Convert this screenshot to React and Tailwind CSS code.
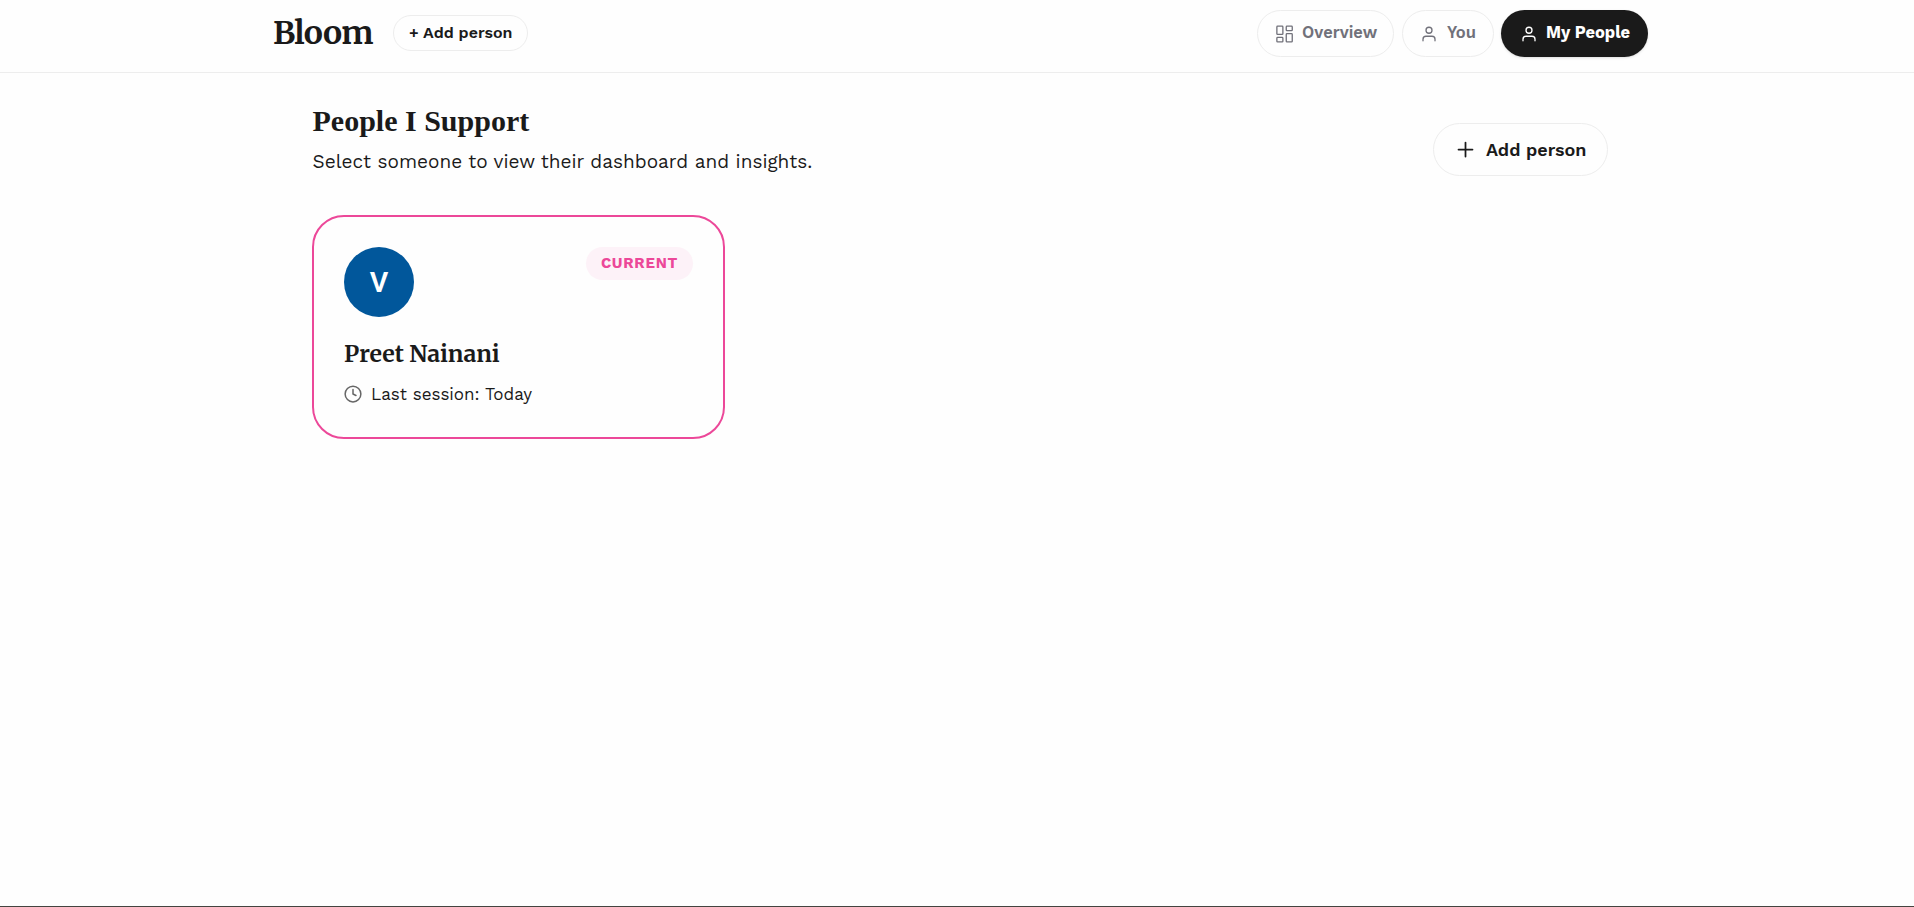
const sans = "font-['Work_Sans','Inter',sans-serif]";
const serif = "font-['Merriweather','DejaVu_Serif',serif]";

function UserIcon() {
  return (
    <svg width="18" height="18" viewBox="0 0 24 24" fill="none" stroke="currentColor" strokeWidth="1.75" strokeLinecap="round" strokeLinejoin="round">
      <path d="M20 21v-2a4 4 0 0 0-4-4H8a4 4 0 0 0-4 4v2" />
      <circle cx="12" cy="7" r="4" />
    </svg>
  );
}

function DashboardIcon() {
  return (
    <svg width="18" height="18" viewBox="0 0 24 24" fill="none" stroke="currentColor" strokeWidth="1.75" strokeLinecap="round" strokeLinejoin="round">
      <rect x="2.5" y="1.5" width="8" height="11" rx="1" />
      <rect x="15" y="1.5" width="8" height="6" rx="1" />
      <rect x="15" y="11.5" width="8" height="11" rx="1" />
      <rect x="2.5" y="16.5" width="8" height="6" rx="1" />
    </svg>
  );
}

function Header() {
  return (
    <header className="h-[73px] border-b border-[#ededed]">
      <div className="ml-[273px] flex w-[1375px] items-start justify-between pt-[10px]">
        <div className="flex items-start">
          <div className={`${serif} w-[120px] whitespace-nowrap text-[32px] leading-[46px] font-bold tracking-[-0.8px]`}>Bloom</div>
          <button className="mt-[5px] flex h-9 w-[135px] items-center rounded-full border border-[#ededed] pl-[15px] text-[16px] font-semibold whitespace-nowrap">
            + Add person
          </button>
        </div>
        <nav className="flex text-[16.5px] leading-[24px] font-semibold whitespace-nowrap text-[#71717a]">
          <button className="mr-2 flex h-[47px] w-[137px] items-center gap-[9px] rounded-full border border-[#ededed] pl-[17px]">
            <DashboardIcon />
            <span className="-mt-px">Overview</span>
          </button>
          <button className="mr-[7px] flex h-[47px] w-[92px] items-center gap-[9px] rounded-full border border-[#ededed] pl-[17px]">
            <UserIcon />
            <span className="-mt-px">You</span>
          </button>
          <button className="flex h-[47px] w-[147px] items-center gap-2 rounded-full bg-[#1a1a1a] pl-[19px] font-bold text-white shadow-sm">
            <UserIcon />
            <span className="-mt-px">My People</span>
          </button>
        </nav>
      </div>
    </header>
  );
}

function PersonCard() {
  return (
    <article className="mt-[39px] h-[224px] w-[413px] rounded-[32px] border-2 border-[#ec4899] px-[30px] pt-[30px]">
      <div className="flex items-start justify-between">
        <div className="flex size-[70px] items-center justify-center rounded-full bg-[#01579b] pt-[2px] font-[Roboto,sans-serif] text-[28.5px] font-semibold text-white">V</div>
        <div className="flex h-[33px] w-[107px] items-center justify-center rounded-full bg-[#fdf2f8] text-[15px] font-bold tracking-[0.75px] text-[#ec4899]">CURRENT</div>
      </div>
      <h2 className={`${serif} mt-[20px] whitespace-nowrap text-[23px] leading-[34px] font-bold`}>Preet Nainani</h2>
      <div className="mt-[12px] flex items-center gap-[9px]">
        <svg className="text-[#666]" width="18" height="18" viewBox="0 0 24 24" fill="none" stroke="currentColor" strokeWidth="2" strokeLinecap="round" strokeLinejoin="round">
          <circle cx="12" cy="12" r="10.5" />
          <path d="M12 6v6l4 2" />
        </svg>
        <span className="text-[17px] leading-[22px] whitespace-nowrap">Last session: Today</span>
      </div>
    </article>
  );
}

export default function App() {
  return (
    <div className={`${sans} flex h-[907px] flex-col overflow-hidden border-b border-[#444440] bg-[#fefefe] text-[#1a1a1a]`}>
      <Header />
      <main className="ml-[312px] w-[1296px] pt-[27px]">
        <div className="flex items-start justify-between">
          <div>
            <h1 className="pl-[0.5px] font-['Liberation_Serif',serif] text-[30px] leading-[42px] font-bold">People I Support</h1>
            <p className="mt-[6px] pl-[0.5px] text-[19px] leading-[28px] whitespace-nowrap">Select someone to view their dashboard and insights.</p>
          </div>
          <button className="mt-[23px] flex h-[53px] w-[175px] items-center gap-[10px] rounded-full border border-[#ededed] pl-[21px] text-[18px] font-semibold whitespace-nowrap">
            <svg width="21" height="21" viewBox="0 0 24 24" fill="none" stroke="currentColor" strokeWidth="2" strokeLinecap="round">
              <path d="M4 12h16M12 4v16" />
            </svg>
            <span>Add person</span>
          </button>
        </div>
        <PersonCard />
      </main>
    </div>
  );
}
